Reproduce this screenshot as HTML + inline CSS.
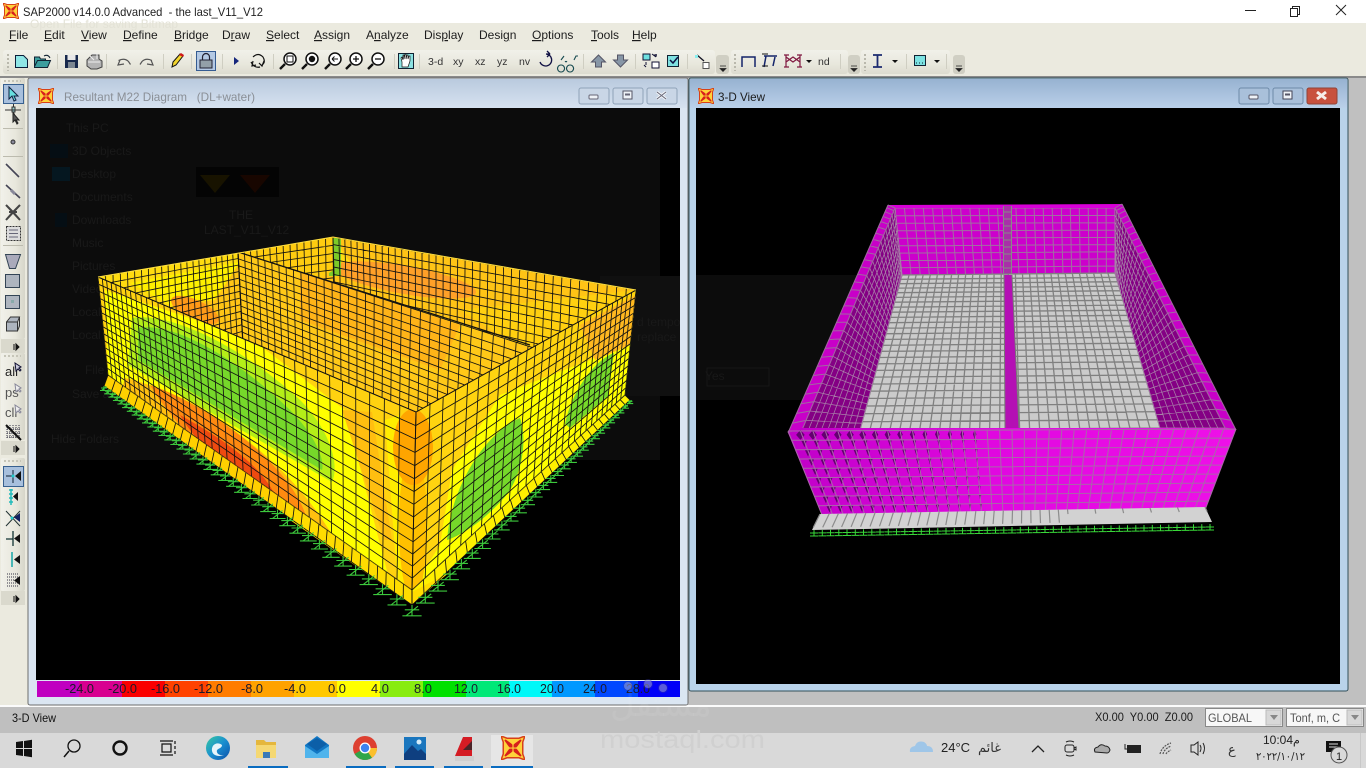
<!DOCTYPE html>
<html><head><meta charset="utf-8"><title>SAP2000</title>
<style>
html,body{margin:0;padding:0;background:#c0c0c0;width:1366px;height:768px;overflow:hidden}
svg{display:block;position:absolute;left:0;top:0}
text{font-family:"Liberation Sans","DejaVu Sans",sans-serif;white-space:pre}
.m{font-size:12px;fill:#1c1c1c}
.t{font-size:10.5px;fill:#333}
.g{font-size:12px;fill:#191919}
.l{font-size:13px;fill:#1a1a2a}
.a{font-family:"DejaVu Sans",sans-serif}
</style></head><body>
<svg width="1366" height="768" viewBox="0 0 1366 768" xmlns="http://www.w3.org/2000/svg">
<defs>
<linearGradient id="tl" x1="0" y1="0" x2="0" y2="1"><stop offset="0" stop-color="#b9cade"/><stop offset="1" stop-color="#d6e2f0"/></linearGradient>
<linearGradient id="tr" x1="0" y1="0" x2="0" y2="1"><stop offset="0" stop-color="#97b2d1"/><stop offset="1" stop-color="#bad0e9"/></linearGradient>
<linearGradient id="tb" x1="0" y1="0" x2="0" y2="1"><stop offset="0" stop-color="#f1f1ea"/><stop offset=".6" stop-color="#e8e7dc"/><stop offset="1" stop-color="#dcdbcf"/></linearGradient>
<linearGradient id="tv" x1="0" y1="0" x2="1" y2="0"><stop offset="0" stop-color="#f1f1ea"/><stop offset=".6" stop-color="#e8e7dc"/><stop offset="1" stop-color="#d6d5c9"/></linearGradient>
<linearGradient id="fw" x1="0" y1="0" x2="1" y2="0"><stop offset="0" stop-color="#c000c8"/><stop offset=".45" stop-color="#e008e0"/><stop offset="1" stop-color="#ee10e8"/></linearGradient>
<linearGradient id="edge" x1="0" y1="0" x2="1" y2="1"><stop offset="0" stop-color="#36c9a0"/><stop offset=".5" stop-color="#1a8fd0"/><stop offset="1" stop-color="#0c4fa8"/></linearGradient>
<clipPath id="cb"><polygon points="98,277 333,237 636,290 416,412"/></clipPath>
<clipPath id="cl"><polygon points="98,277 416,412 412,590 108,375"/></clipPath>
<clipPath id="cr"><polygon points="416,412 636,290 625,395 412,590"/></clipPath>
<clipPath id="vw"><rect x="36" y="108" width="644" height="572"/></clipPath>
<symbol id="sap" viewBox="0 0 32 32">
<path d="M0 0L8 3H24L32 0L29 8V24L32 32L24 29H8L0 32L3 24V8Z" fill="#ffd23a" stroke="#d84018" stroke-width="2"/>
<path d="M6 6L13 11L16 14L19 11L26 6L21 13L18 16L21 19L26 26L19 21L16 18L13 21L6 26L11 19L14 16L11 13Z" fill="#d8201c" stroke="#d8201c" stroke-width="2.500" stroke-linejoin="round"/>
<path d="M16 9v14M9 16h14" stroke="#ffd23a" stroke-width="1.500"/>
</symbol>
<g id="mag"><circle cx="3" cy="-2" r="6" fill="#fff" stroke="#111" stroke-width="1.500"/><path d="M-2 3L-7 8" stroke="#111" stroke-width="2.400"/></g>
</defs>

<!-- base -->
<rect width="1366" height="768" fill="#c0c0c0"/>
<rect width="1366" height="23" fill="#fff"/>
<rect y="23" width="1366" height="53" fill="#ebeadf"/>
<rect y="76" width="1366" height="2" fill="#8a8a8a"/>
<rect y="78" width="28" height="628" fill="#ebeadf"/>
<rect y="705" width="1366" height="2" fill="#fbfbfb"/>
<rect y="707" width="1366" height="26" fill="#bfbfbf"/>
<rect y="733" width="1366" height="35" fill="#d9d9d9"/>

<!-- title bar -->
<use href="#sap" x="3" y="3" width="16" height="16"/>
<text x="23" y="16" font-size="12" fill="#222" textLength="240" lengthAdjust="spacingAndGlyphs">SAP2000 v14.0.0 Advanced  - the last_V11_V12</text>
<path d="M1245 10.500h11" stroke="#222"/>
<path d="M1290.500 8.500h7v8h-7zM1292.500 8.500v-2h7v8h-2" fill="none" stroke="#222"/>
<path d="M1336 5l10 10M1346 5l-10 10" stroke="#222"/>
<text x="30" y="28" font-size="12" fill="#e3e2d6">Open File for saving Bitmap</text>

<!-- menu -->
<g class="m">
<text class="m" x="9" y="39"><tspan text-decoration="underline">F</tspan>ile</text>
<text class="m" x="44" y="39"><tspan text-decoration="underline">E</tspan>dit</text>
<text class="m" x="81" y="39"><tspan text-decoration="underline">V</tspan>iew</text>
<text class="m" x="123" y="39"><tspan text-decoration="underline">D</tspan>efine</text>
<text class="m" x="174" y="39"><tspan text-decoration="underline">B</tspan>ridge</text>
<text class="m" x="222" y="39">D<tspan text-decoration="underline">r</tspan>aw</text>
<text class="m" x="266" y="39"><tspan text-decoration="underline">S</tspan>elect</text>
<text class="m" x="314" y="39"><tspan text-decoration="underline">A</tspan>ssign</text>
<text class="m" x="366" y="39">A<tspan text-decoration="underline">n</tspan>alyze</text>
<text class="m" x="424" y="39">Dis<tspan text-decoration="underline">p</tspan>lay</text>
<text class="m" x="479" y="39">Desi<tspan text-decoration="underline">g</tspan>n</text>
<text class="m" x="532" y="39"><tspan text-decoration="underline">O</tspan>ptions</text>
<text class="m" x="591" y="39"><tspan text-decoration="underline">T</tspan>ools</text>
<text class="m" x="632" y="39"><tspan text-decoration="underline">H</tspan>elp</text>
</g>

<!-- toolbars -->
<rect x="3" y="50" width="712" height="24" rx="3" fill="url(#tb)"/>
<rect x="716" y="55" width="13" height="19" rx="3" fill="#d0cfc3"/>
<path d="M720 66h6M720 68.500h6l-3 3z" fill="#222" stroke="#222" stroke-width=".7"/>
<rect x="731" y="50" width="117" height="24" rx="3" fill="url(#tb)"/>
<rect x="848" y="55" width="12" height="19" rx="3" fill="#d0cfc3"/>
<path d="M851 66h6M851 68.500h6l-3 3z" fill="#222" stroke="#222" stroke-width=".7"/>
<rect x="861" y="50" width="89" height="24" rx="3" fill="url(#tb)"/>
<rect x="953" y="55" width="12" height="19" rx="3" fill="#d0cfc3"/>
<path d="M956 66h6M956 68.500h6l-3 3z" fill="#222" stroke="#222" stroke-width=".7"/>
<path d="M8 54v17M735 54v17M865 54v17" stroke="#b9b8ac" stroke-width="2" stroke-dasharray="2 2"/>
<path d="M57.500 54v15M106.500 54v15M163.500 54v15M191.500 54v15M222.500 54v15M273.500 54v15M394.500 54v15M419.500 54v15M583.500 54v15M635.500 54v15M687.500 54v15M840.500 54v15M906.500 54v15M946.500 54v15" stroke="#cfcec2"/>
<!-- new / open / save / print -->
<path d="M15.500 55.500h8l4 4v8h-12z" fill="#8fe6e6" stroke="#0a1d3a"/>
<path d="M34.500 66.500l3-6h13l-3 7h-13zM34.500 66v-9h5l1 2h5v1" fill="#3d9e9e" stroke="#123"/>
<path d="M44 56q4-2 6 2" fill="none" stroke="#123"/>
<rect x="65" y="55" width="13" height="13" fill="#18294c"/><rect x="67.500" y="55" width="8" height="5" fill="#e8e8e8"/><rect x="68" y="62" width="7" height="6" fill="#7c8792"/>
<path d="M87 60l5-5h7v4l3 2v6l-5 2h-6l-4-3z" fill="#b4b4b4" stroke="#444"/><path d="M88 62h12M90 56l4 4M92 54h5v5" stroke="#eee" fill="none"/>
<path d="M120 60l-2 5 6-1M118.500 60.500q6-3 10 1l2 3" fill="none" stroke="#555" stroke-width="1.200"/>
<path d="M151 60l2 5-6-1M152 60.500q-6-3-10 1l-2 3" fill="none" stroke="#555" stroke-width="1.200"/>
<path d="M172 67l1-5 7-8 3 2-7 9z" fill="#f2d52e" stroke="#111"/><path d="M179 55l2-2 3 2-1 2z" fill="#d01818"/>
<rect x="196.500" y="51.500" width="19" height="19" fill="#b4c9e4" stroke="#355c92"/>
<rect x="200" y="60" width="12" height="8" fill="#93a0a8" stroke="#223"/><path d="M202.500 60v-3a3.500 3.500 0 0 1 7 0v3" fill="none" stroke="#223" stroke-width="1.200"/>
<path d="M234 57l5 4-5 4z" fill="#16267c"/>
<path d="M253 57q5-5 10 0q3 5-1 8M264 61l-2 5-3-3M260 67q-4 1-7-2l-2-3M253 61l-1 5 4-1" fill="none" stroke="#111" stroke-width="1.200"/>
<!-- zoom -->
<g transform="translate(287,61)"><use href="#mag"/><rect x="0" y="-5" width="6" height="6" fill="none" stroke="#111"/></g>
<g transform="translate(309,61)"><use href="#mag"/><circle cx="3" cy="-2" r="3.200" fill="#111"/></g>
<g transform="translate(332,61)"><use href="#mag"/><path d="M0-2h6M0-2l2.500-2.500M0-2l2.500 2.500" stroke="#111" fill="none"/></g>
<g transform="translate(353,61)"><use href="#mag"/><path d="M0-2h6M3-5v6" stroke="#111" stroke-width="1.300"/></g>
<g transform="translate(375,61)"><use href="#mag"/><path d="M0-2h6" stroke="#111" stroke-width="1.300"/></g>
<rect x="398.500" y="53.500" width="15" height="15" fill="#8ce2e2" stroke="#123"/>
<path d="M402 67v-5l-1-4 1-1 1 3v-5h1v4l1-5h1v5l1-4h1v4l1-3h1v5l-2 6z" fill="#fff" stroke="#111" stroke-width=".7"/>
<g class="t">
<text class="t" x="428" y="65" font-size="11">3-d</text>
<text class="t" x="453" y="65">xy</text><text class="t" x="475" y="65">xz</text><text class="t" x="497" y="65">yz</text><text class="t" x="519" y="65">nv</text>
<text class="t" x="818" y="65" font-size="11">nd</text>
</g>
<path d="M540 62a6 6 0 1 0 6-8h4M550 54l-3-3M550 54l-3 3" fill="none" stroke="#114" stroke-width="1.300"/>
<path d="M561 65a3.500 3.500 0 1 0 .1 0zM570 65a3.500 3.500 0 1 0 .1 0zM565 62q1-1 2 0M574 60l2-4h2M561 60l3-4" fill="none" stroke="#164a50" stroke-width="1.100"/>
<path d="M598.500 54l7 7h-4v5h-6v-5h-4z" fill="#8796a6" stroke="#556" transform="translate(0,1)"/>
<path d="M620.500 67l7-7h-4v-5h-6v5h-4z" fill="#8796a6" stroke="#556"/>
<rect x="643" y="54" width="7" height="6" fill="#6ee0e0" stroke="#113"/><rect x="652" y="62" width="7" height="6" fill="#fff" stroke="#113"/>
<path d="M652 54l4 3M656 57v-3M644 65l2 2M646 62v3M653 55h4" stroke="#113" fill="none"/>
<rect x="667.500" y="55.500" width="11" height="11" fill="#7fe1e1" stroke="#123"/><path d="M670 60l3 3 5-6" fill="none" stroke="#0a1040" stroke-width="1.500"/>
<path d="M697 55l7 6" stroke="#112" stroke-width="1.300"/><rect x="695" y="55" width="3" height="3" fill="#8ee"/><rect x="703" y="62.500" width="6" height="6" fill="#fff" stroke="#555"/>
<!-- frame icons -->
<path d="M742 67v-10h13v10" fill="none" stroke="#14246a" stroke-width="1.500"/>
<path d="M764 67l2-11M775 57l-2 9M764 56h13" fill="none" stroke="#14246a" stroke-width="1.500"/><path d="M762 54h6M762 66h6" stroke="#111"/>
<path d="M786 55v12M800 55v12M786 62l7-5 7 5M786 57l7 5 7-5M784 55h5M797 55h5M784 67h5M797 67h5" fill="none" stroke="#801840" stroke-width="1.200"/>
<path d="M806 60h6l-3 3z" fill="#111"/>
<path d="M873 55h9M873 67h9M877.500 55v12" stroke="#1b2a70" stroke-width="1.800"/>
<path d="M892 60h6l-3 3z" fill="#111"/>
<rect x="914.500" y="55.500" width="11" height="10" fill="#7ce2e2" stroke="#123"/><path d="M916 63h8" stroke="#123" stroke-dasharray="1 2"/>
<path d="M934 60h6l-3 3z" fill="#111"/>

<!-- left toolbar -->
<rect x="1" y="78" width="24" height="261" rx="2" fill="url(#tv)"/>
<rect x="1" y="339" width="24" height="14" fill="#dad9cd"/>
<rect x="1" y="353" width="24" height="87" rx="2" fill="url(#tv)"/>
<rect x="1" y="441" width="24" height="14" fill="#dad9cd"/>
<rect x="1" y="458" width="24" height="133" rx="2" fill="url(#tv)"/>
<rect x="1" y="591" width="24" height="14" fill="#dad9cd"/>
<path d="M4 81h17M4 356h17M4 461h17" stroke="#c6c5b8" stroke-width="2" stroke-dasharray="2 2"/>
<path d="M3 128.500h20M3 156.500h20M3 245.500h20" stroke="#bcbbae"/>
<path d="M16 344v6l3-3zM16 446v6l3-3zM16 596v6l3-3zM14 344v6M14 446v6M14 596v6" stroke="#111" fill="#111"/>
<rect x="3.500" y="84.500" width="20" height="19" fill="#a8c0dd" stroke="#38608f"/>
<path d="M9 87v12l3-3 2 5 2-1-2-4h4z" fill="#67dfe0" stroke="#102040"/>
<path d="M5 110h16M12 107h3v5h-3zM13.500 104v3M13.500 112l1 3" stroke="#333" fill="#9cc" />
<path d="M13 113v9l2-2 2 4 1-1-2-3h3z" fill="#555" stroke="#222"/>
<circle cx="13" cy="142" r="2" fill="#889" stroke="#333"/>
<path d="M6 164l13 13" stroke="#445" stroke-width="1.600"/>
<path d="M6 185l14 13" stroke="#445" stroke-width="1.600"/><path d="M11 190l4 4" stroke="#889" stroke-width="3"/>
<path d="M6 205l7 7-7 8M20 205l-7 7 7 8M6 205l14 15M20 205l-14 15M9 212h8" stroke="#444" stroke-width="2" fill="none"/>
<rect x="6.500" y="226.500" width="14" height="14" fill="#dcdcdc" stroke="#333" stroke-dasharray="2 1"/><path d="M9 230h9M9 233.500h9M9 237h9" stroke="#667"/>
<path d="M5.500 254.500h15l-5 14h-6z" fill="#aab" stroke="#345"/>
<rect x="5.500" y="274.500" width="14" height="13" fill="#aeb5bf" stroke="#345"/>
<rect x="5.500" y="295.500" width="14" height="13" fill="#aeb5bf" stroke="#345"/><rect x="11" y="300" width="3" height="3" fill="#8aa"/>
<path d="M6.500 322v9h11v-9zM6.500 322l4-5h9l-2 5M19.500 317v9l-2 5" fill="#aeb5bf" stroke="#333"/>
<text x="5" y="376" font-size="13" fill="#222">all</text><path d="M15 363l1 8 2-2 2 2 1-1-2-2 2-1z" fill="#ccd" stroke="#113"/>
<text x="5" y="397" font-size="13" fill="#555">ps</text><path d="M15 384l1 8 2-2 2 2 1-1-2-2 2-1z" fill="#eee" stroke="#889"/>
<text x="5" y="417" font-size="13" fill="#555">clr</text><path d="M15 405l1 8 2-2 2 2 1-1-2-2 2-1z" fill="#eee" stroke="#889"/>
<path d="M7 425v14M10 425v14M13 425v14M16 425v14M19 425v14M7 429h13M7 433h13M7 437h13" stroke="#334" stroke-dasharray="1 1"/><path d="M6 425l15 15" stroke="#111" stroke-width="2"/>
<rect x="3.500" y="466.500" width="20" height="20" fill="#a8c0dd" stroke="#38608f"/>
<path d="M6 476h7M13 470v13" stroke="#123"/><path d="M21 471v10l-6-5z" fill="#111"/><circle cx="13" cy="476" r="1.500" fill="#2cc"/>
<path d="M11 489v16M9 490h4M9 494h4M9 498h4M9 502h4" stroke="#2bb" stroke-width="1.500"/><path d="M18 492v9l-5-4.500z" fill="#111"/>
<path d="M6 511l14 15M6 526l14-15" stroke="#233"/><path d="M20 513v9l-6-4.500z" fill="#112060"/><circle cx="12" cy="518" r="1.500" fill="#2cc"/>
<path d="M6 539h7M13 531v15" stroke="#133" stroke-width="1.300"/><path d="M20 534v9l-6-4.500z" fill="#111"/>
<path d="M12 552v15" stroke="#2aa" stroke-width="1.600"/><path d="M20 555v9l-6-4.500z" fill="#111"/>
<path d="M7 574h12M7 577h12M7 580h12M7 583h12M7 586h12" stroke="#334" stroke-dasharray="1 1"/><path d="M20 576v9l-6-4.500z" fill="#111"/>

<!-- left child window -->
<rect x="28" y="78" width="660" height="627" rx="2" fill="#dbe6f2" stroke="#6e6e6e"/>
<rect x="29" y="79" width="658" height="29" fill="url(#tl)"/>
<use href="#sap" x="38" y="88" width="16" height="16"/>
<text x="64" y="101" font-size="12" fill="#8a8f96" textLength="191" lengthAdjust="spacingAndGlyphs">Resultant M22 Diagram   (DL+water)</text>
<rect x="579" y="88" width="30" height="16" rx="2" fill="#c9d6e6" stroke="#8fa3b8"/>
<rect x="613" y="88" width="30" height="16" rx="2" fill="#c9d6e6" stroke="#8fa3b8"/>
<rect x="647" y="88" width="30" height="16" rx="2" fill="#c9d6e6" stroke="#8fa3b8"/>
<rect x="589" y="95" width="9" height="4" rx="1" fill="#eef2f7" stroke="#667"/>
<rect x="623" y="91" width="9" height="8" fill="#eef2f7" stroke="#556"/><rect x="625" y="93.500" width="5" height="2" fill="#667"/>
<path d="M657 92l9 7M666 92l-9 7" stroke="#f2f5f8" stroke-width="3"/><path d="M657 92l9 7M666 92l-9 7" stroke="#667" stroke-width="1"/>
<rect x="36" y="108" width="644" height="572" fill="#000"/>
<!-- ghost dialog -->
<rect x="36" y="108" width="624" height="352" fill="#0c0c0c"/>
<rect x="600" y="276" width="80" height="120" fill="#101010"/>
<rect x="196" y="167" width="83" height="30" fill="#040404"/>
<path d="M200 175h30l-15 18z" fill="#181300"/><path d="M240 175h30l-15 18z" fill="#180600"/>
<g class="g" clip-path="url(#vw)">
<text class="g" x="66" y="132">This PC</text><text class="g" x="72" y="155">3D Objects</text><text class="g" x="72" y="178">Desktop</text><text class="g" x="72" y="201">Documents</text><text class="g" x="72" y="224">Downloads</text><text class="g" x="72" y="247">Music</text><text class="g" x="72" y="270">Pictures</text><text class="g" x="72" y="293">Videos</text><text class="g" x="72" y="316">Local Disk</text><text class="g" x="72" y="339">Local Disk</text><text class="g" x="85" y="374">File name:</text><text class="g" x="72" y="398">Save as type:</text><text class="g" x="51" y="443">Hide Folders</text><text class="g" x="229" y="219">THE</text><text class="g" x="204" y="234">LAST_V11_V12</text><text class="g" x="637" y="326">d temporarily ends</text><text class="g" x="637" y="341">replace it?</text>
</g>
<rect x="50" y="144" width="18" height="14" fill="#050e14"/><rect x="52" y="167" width="18" height="14" fill="#051720"/><rect x="55" y="213" width="12" height="14" fill="#050e14"/>

<!-- left model -->
<g clip-path="url(#cb)">
<rect x="90" y="230" width="560" height="190" fill="#ffc416"/>
<path d="M98 277L333 237L350 262L240 262L205 300L150 315Z" fill="#ffdc10"/>
<path d="M130 283L240 262L215 300L170 305Z" fill="#fff000"/>
<ellipse cx="195" cy="310" rx="26" ry="10" transform="rotate(25 195 310)" fill="#ff9a18"/>
<ellipse cx="405" cy="280" rx="72" ry="14" transform="rotate(10 405 280)" fill="#ffa028"/>
<path d="M460 310L636 290L636 350L540 360Z" fill="#ffd010"/>
<rect x="329" y="238" width="12" height="38" fill="#7ccb28"/>
<path d="M238 252L333 237L334 270L300 290L243 300Z" fill="#ffcc10"/>
<path id="mb3" fill="none" stroke="#111" stroke-width=".85"/>
<path id="mb2" fill="none" stroke="#111" stroke-width=".85"/>
<path id="mb1" fill="none" stroke="#111" stroke-width=".85"/>
<polygon points="238,252 540,350 530,470 243,345" fill="#ffc818"/>
<path d="M300 272L460 325L440 370L300 320Z" fill="#ffb418"/>
<path id="mb4" fill="none" stroke="#111" stroke-width=".85"/>
<path d="M238 252L530 345M238 252L243 345" stroke="#111" stroke-width="1.200" fill="none"/>
</g>
<polygon points="108,375 412,590 412,605 104,386" fill="#ffd000"/>
<polygon points="280,495 412,590 412,605 290,520" fill="#ffdc00"/>
<polygon points="412,590 625,395 630,400 412,605" fill="#fff000"/>
<polygon points="412,592 450,572 440,580 412,605" fill="#ffdc00"/>
<path id="msl" fill="none" stroke="#111" stroke-width=".85"/>
<path id="msr" fill="none" stroke="#111" stroke-width=".85"/>
<g clip-path="url(#cl)">
<rect x="90" y="270" width="330" height="330" fill="#ffd210"/>
<path d="M105 290L250 338L345 410L392 590L330 548L108 375Z" fill="#ffff00"/>
<path d="M342 410L372 412L392 540L384 540Z" fill="#ffbe10"/>
<path d="M385 420L400 415L412 590L398 590Z" fill="#ffee00"/>
<path d="M132 318C170 312 240 345 300 400C330 430 340 465 332 482L128 365Z" fill="#b4ee18"/>
<path d="M138 328C170 322 230 352 290 410C315 435 325 460 322 470L138 360Z" fill="#76d82a"/>
<path d="M125 378C190 392 300 460 345 560L120 395Z" fill="#ffc010"/>
<path d="M150 385C210 405 290 465 306 516C260 500 190 450 150 385Z" fill="#ff8a10"/>
<path d="M180 415C225 440 260 465 275 495C240 478 200 450 180 415Z" fill="#ee4a10"/>
<ellipse cx="413" cy="525" rx="14" ry="75" fill="#ffc000"/>
<ellipse cx="413" cy="447" rx="20" ry="38" fill="#ffa500"/>
<path id="ml" fill="none" stroke="#111" stroke-width=".85"/>
</g>
<g clip-path="url(#cr)">
<rect x="410" y="285" width="230" height="310" fill="#ffff00"/>
<path d="M416 412L636 290L632 335L590 360L500 395L452 470L440 545L412 590Z" fill="#ffd410"/>
<ellipse cx="413" cy="525" rx="14" ry="75" fill="#ffc000"/>
<ellipse cx="413" cy="447" rx="20" ry="38" fill="#ffa500"/>
<path d="M440 560C450 470 495 415 530 408L528 470L480 530Z" fill="#ffff00"/>
<path d="M447 540C452 480 490 430 520 418C528 440 522 480 502 500C482 522 462 535 447 540Z" fill="#76d82a"/>
<path d="M565 424C572 390 595 360 614 353L608 396L570 428Z" fill="#76d82a"/>
<path d="M580 325L636 295L630 345L595 360Z" fill="#ffb820"/>
<path id="mr" fill="none" stroke="#111" stroke-width=".85"/>
</g>
<path d="M98 277L416 412L636 290M416 412L412 590" fill="none" stroke="#111" stroke-width="1"/>
<path d="M98 277L333 237L636 290" fill="none" stroke="#ffe040" stroke-width="1"/>
<path id="sl" fill="none" stroke="#3cc83c" stroke-width="1.100"/>

<!-- legend -->
<rect x="37" y="681" width="643" height="16" fill="#c000c0"/>
<rect x="79" y="681" width="43" height="16" fill="#d80090"/>
<rect x="122" y="681" width="43" height="16" fill="#fa0000"/>
<rect x="165" y="681" width="43" height="16" fill="#ff4200"/>
<rect x="208" y="681" width="43" height="16" fill="#ff7c00"/>
<rect x="251" y="681" width="43" height="16" fill="#ffa200"/>
<rect x="294" y="681" width="43" height="16" fill="#ffc800"/>
<rect x="337" y="681" width="43" height="16" fill="#ffff00"/>
<rect x="380" y="681" width="43" height="16" fill="#88ec10"/>
<rect x="423" y="681" width="43" height="16" fill="#00e000"/>
<rect x="466" y="681" width="43" height="16" fill="#00e878"/>
<rect x="509" y="681" width="43" height="16" fill="#00f8f8"/>
<rect x="552" y="681" width="43" height="16" fill="#0098ff"/>
<rect x="595" y="681" width="43" height="16" fill="#0048ff"/>
<rect x="638" y="681" width="42" height="16" fill="#0000f8"/>
<g class="l">
<text class="l" x="65" y="693" textLength="29" lengthAdjust="spacingAndGlyphs">-24.0</text>
<text class="l" x="108" y="693" textLength="29" lengthAdjust="spacingAndGlyphs">-20.0</text>
<text class="l" x="151" y="693" textLength="29" lengthAdjust="spacingAndGlyphs">-16.0</text>
<text class="l" x="194" y="693" textLength="29" lengthAdjust="spacingAndGlyphs">-12.0</text>
<text class="l" x="241" y="693" textLength="22" lengthAdjust="spacingAndGlyphs">-8.0</text>
<text class="l" x="284" y="693" textLength="22" lengthAdjust="spacingAndGlyphs">-4.0</text>
<text class="l" x="328" y="693" textLength="18" lengthAdjust="spacingAndGlyphs">0.0</text>
<text class="l" x="371" y="693" textLength="18" lengthAdjust="spacingAndGlyphs">4.0</text>
<text class="l" x="414" y="693" textLength="18" lengthAdjust="spacingAndGlyphs">8.0</text>
<text class="l" x="454" y="693" textLength="24" lengthAdjust="spacingAndGlyphs">12.0</text>
<text class="l" x="497" y="693" textLength="24" lengthAdjust="spacingAndGlyphs">16.0</text>
<text class="l" x="540" y="693" textLength="24" lengthAdjust="spacingAndGlyphs">20.0</text>
<text class="l" x="583" y="693" textLength="24" lengthAdjust="spacingAndGlyphs">24.0</text>
<text class="l" x="626" y="693" textLength="24" lengthAdjust="spacingAndGlyphs">28.0</text>
</g>

<!-- right child window -->
<rect x="689" y="78" width="659" height="613" rx="2" fill="#b9d3ea" stroke="#32505a"/>
<rect x="690" y="79" width="657" height="29" fill="url(#tr)"/>
<use href="#sap" x="698" y="88" width="16" height="16"/>
<text x="718" y="101" font-size="12" fill="#1c1c1c" textLength="47" lengthAdjust="spacingAndGlyphs">3-D View</text>
<rect x="1239" y="88" width="30" height="16" rx="2" fill="#a9c0da" stroke="#6d8aa8"/>
<rect x="1273" y="88" width="30" height="16" rx="2" fill="#a9c0da" stroke="#6d8aa8"/>
<rect x="1307" y="88" width="30" height="16" rx="2" fill="#c8513e" stroke="#904438"/>
<rect x="1249" y="95" width="9" height="4" rx="1" fill="#eef2f7" stroke="#556"/>
<rect x="1283" y="91" width="9" height="8" fill="#eef2f7" stroke="#445"/><rect x="1285" y="93.500" width="5" height="2" fill="#556"/>
<path d="M1317 92l9 7M1326 92l-9 7" stroke="#f6eeea" stroke-width="3"/>
<rect x="696" y="108" width="644" height="576" fill="#000"/>
<rect x="696" y="275" width="165" height="125" fill="#0c0c0c"/>
<text x="705" y="380" font-size="12" fill="#181818">Yes</text>
<rect x="707" y="368" width="62" height="18" fill="none" stroke="#161616"/>

<!-- right model -->
<polygon points="895,208 1115,208 1115,273 902,275" fill="#cc00cc"/>
<path id="rb" fill="none" stroke="#a070a0" stroke-width="1"/>
<polygon points="888,205 1122,204 1115,208 895,208" fill="#d800d8"/>
<rect x="1003" y="206" width="9" height="69" fill="#a830a8"/>
<path d="M1003.500 206v69M1011.500 206v69M1004 212h7M1004 219h7M1004 226h7M1004 233h7M1004 240h7M1004 247h7M1004 254h7M1004 261h7M1004 268h7" stroke="#888"/>
<polygon points="902,275 1115,273 1160,428 860,430" fill="#cbcbcb"/>
<path id="rf" fill="none" stroke="#808080" stroke-width="1.300"/>
<polygon points="1004,275 1012,275 1019,428 1005,428" fill="#b410b4"/>
<path d="M1004 275l1 153M1012 275l7 153" stroke="#777"/>
<polygon points="895,208 902,275 860,430 802,430" fill="#840084"/>
<path id="ril" fill="none" stroke="#a880a8" stroke-width=".75"/>
<polygon points="1115,208 1115,273 1160,428 1225,428" fill="#840084"/>
<path id="rir" fill="none" stroke="#a880a8" stroke-width=".75"/>
<polygon points="888,205 895,208 802,430 788,433" fill="#c800c8"/>
<path id="rbl" fill="none" stroke="#a068a0" stroke-width="1"/>
<polygon points="1122,204 1115,208 1225,428 1236,430" fill="#c800c8"/>
<path id="rbr" fill="none" stroke="#a068a0" stroke-width="1"/>
<polygon points="788,433 802,428 1225,428 1236,430 1205,510 822,515" fill="url(#fw)"/>
<path id="rw" fill="#640070"/>
<path id="rfw" fill="none" stroke="#a868a8" stroke-width="1"/>
<polygon points="820,514 1205,507 1212,522 812,530" fill="#d2d2d2"/>
<path id="rsl" fill="none" stroke="#8c8c8c" stroke-width="1.200"/>
<path id="rsup" fill="none" stroke="#38d838" stroke-width="1"/>

<!-- status bar -->
<text x="12" y="722" font-size="12" fill="#111" textLength="44" lengthAdjust="spacingAndGlyphs">3-D View</text>
<text x="1095" y="721" font-size="12" fill="#1c1c1c" textLength="98" lengthAdjust="spacingAndGlyphs">X0.00  Y0.00  Z0.00</text>
<rect x="1205.500" y="708.500" width="77" height="18" fill="#f7f7f7" stroke="#888"/>
<rect x="1266" y="710" width="15" height="15" fill="#d8d8d8" stroke="#bbb"/><path d="M1270 715h8l-4 5z" fill="#888"/>
<text x="1208" y="722" font-size="12" fill="#555" textLength="44" lengthAdjust="spacingAndGlyphs">GLOBAL</text>
<rect x="1286.500" y="708.500" width="77" height="18" fill="#f7f7f7" stroke="#888"/>
<rect x="1347" y="710" width="15" height="15" fill="#d8d8d8" stroke="#bbb"/><path d="M1351 715h8l-4 5z" fill="#888"/>
<text x="1290" y="722" font-size="12" fill="#555" textLength="50" lengthAdjust="spacingAndGlyphs">Tonf, m, C</text>

<!-- watermark -->
<text x="600" y="748" font-size="25" fill="#d0d0d0" textLength="165" lengthAdjust="spacingAndGlyphs">mostaql.com</text>
<text class="a" x="610" y="716" font-size="34" fill="#fff" fill-opacity=".07">مستقل</text>
<g fill="#3a3aa0" opacity=".4"><circle cx="628" cy="686" r="5"/><circle cx="648" cy="684" r="5"/><circle cx="663" cy="688" r="5"/></g>
<g fill="#d6dce6" opacity=".35"><circle cx="628" cy="686" r="4"/><circle cx="648" cy="684" r="4"/><circle cx="663" cy="688" r="4"/></g>

<!-- taskbar -->
<rect x="491" y="735" width="42" height="33" fill="#e6e6e6"/>
<rect x="248" y="766" width="40" height="2" fill="#0a6cc0"/><rect x="346" y="766" width="40" height="2" fill="#0a6cc0"/><rect x="395" y="766" width="39" height="2" fill="#0a6cc0"/><rect x="444" y="766" width="39" height="2" fill="#0a6cc0"/><rect x="491" y="766" width="42" height="2" fill="#0a6cc0"/>
<path d="M16 742l7-1v7h-7zM24 741l8-1.200v8.200h-8zM16 749h7v7l-7-1zM24 749h8v8.200l-8-1.200z" fill="#111"/>
<circle cx="74" cy="746" r="6" fill="none" stroke="#111" stroke-width="1.300"/><path d="M69 751l-5 6" stroke="#111" stroke-width="1.500"/>
<circle cx="120" cy="748" r="6.500" fill="none" stroke="#111" stroke-width="2.400"/>
<path d="M160 741h13M160 755h13M162 744h9v8h-9zM175 741v3M175 746v3M175 751v3" fill="none" stroke="#111" stroke-width="1.200"/>
<circle cx="218" cy="748" r="12" fill="url(#edge)"/><path d="M222 745c-5-4-11 0-10 6 1 5 7 6 12 4-5 1-8-2-7-5 2-2 5-2 5-5z" fill="#e6f4fa"/>
<path d="M256 740h8l2 2h10v15h-20z" fill="#e5b73d"/><rect x="256" y="745" width="20" height="13" fill="#f5d873"/><path d="M263 758v-6h7v6" fill="#3a7ab8"/>
<path d="M305 745l12-9 12 9v13h-24z" fill="#1177c4"/><path d="M305 746l12 8 12-8v12h-24z" fill="#50b4ec"/><path d="M307 744l10 7 10-7-10-6z" fill="#0c5fa8"/>
<circle cx="365" cy="748" r="12" fill="#dd4031"/><path d="M365 748L354.600 754A12 12 0 0 0 372 757.800z" fill="#2fa64a"/><path d="M365 748L377 748A12 12 0 0 1 372 757.800z" fill="#fbc02d"/><circle cx="365" cy="748" r="5.500" fill="#fff"/><circle cx="365" cy="748" r="4.200" fill="#3e83f0"/>
<rect x="404" y="737" width="22" height="23" fill="#1a76be"/><path d="M404 760v-6l8-9 6 6 3-2 5 5v6z" fill="#0e3f80"/><circle cx="419" cy="742" r="2.500" fill="#d4ecfa"/>
<path d="M455 756l8-19h9v19z" fill="#d41c24"/><path d="M455 756h19v5h-19z" fill="#cfcfcf"/><path d="M463 750h9v-9z" fill="#4a2428"/>
<use href="#sap" x="501" y="736" width="24" height="24"/>

<!-- tray -->
<path d="M910 752q-1-5 5-6 2-6 9-4 3 2 3 4 6 0 6 6z" fill="#9fc6e8"/>
<text x="941" y="752" font-size="13" fill="#222">24°C</text>
<text class="a" x="978" y="752" font-size="13" fill="#333">غائم</text>
<path d="M1032 752l6-6 6 6" fill="none" stroke="#222" stroke-width="1.300"/>
<rect x="1065" y="745" width="9" height="7" rx="2" fill="none" stroke="#222"/><path d="M1074 748l2-1v3l-2-1M1066 742q4-2 8 0M1066 755q4 2 8 0" fill="none" stroke="#222"/>
<path d="M1095 752q-2-4 3-5 3-4 7-1 4 0 5 4-1 3-3 3z" fill="#aaa" stroke="#222"/>
<rect x="1127" y="745" width="14" height="8" fill="#222"/><path d="M1125 744v5h3" fill="none" stroke="#222"/>
<path d="M1160 754q2-8 11-11M1163 754q1-5 8-8M1166 754q1-2 5-4" fill="none" stroke="#555" stroke-width="1.200" stroke-dasharray="2 1"/>
<path d="M1191 745h3l4-3v13l-4-3h-3z" fill="none" stroke="#222"/><path d="M1200 745q2 3 0 7M1203 743q3 5 0 11" fill="none" stroke="#222"/>
<text class="a" x="1228" y="754" font-size="13" fill="#333">ع</text>
<text x="1263" y="744" font-size="12" fill="#222">10:04</text><text class="a" x="1293" y="744" font-size="11" fill="#222">م</text>
<text class="a" x="1256" y="760" font-size="11" fill="#222" textLength="49" lengthAdjust="spacingAndGlyphs">٢٠٢٢/١٠/١٢</text>
<path d="M1326 741h15v11h-7l-3 4v-4h-5z" fill="#111"/><path d="M1329 744h9M1329 747h9" stroke="#ddd"/>
<circle cx="1339" cy="755" r="8" fill="#d9d9d9" stroke="#555"/><text x="1336" y="760" font-size="11" fill="#222">1</text>
<path d="M1360.500 733v35" stroke="#c8c8c8"/>

<script>
function H(q){var x0=q[0][0],y0=q[0][1],x1=q[1][0],y1=q[1][1],x2=q[2][0],y2=q[2][1],x3=q[3][0],y3=q[3][1],
dx1=x1-x2,dx2=x3-x2,sx=x0-x1+x2-x3,dy1=y1-y2,dy2=y3-y2,sy=y0-y1+y2-y3,den=dx1*dy2-dx2*dy1,
g=(sx*dy2-dx2*sy)/den,h=(dx1*sy-sx*dy1)/den,a=x1-x0+g*x1,b=x3-x0+h*x3,d=y1-y0+g*y1,e=y3-y0+h*y3;
return function(u,v){var w=g*u+h*v+1;return[(a*u+b*v+x0)/w,(d*u+e*v+y0)/w]}}
function B(q,pu,pv){return function(u,v){u=Math.pow(u,pu||1);v=Math.pow(v,pv||1);
var tx=q[0][0]+(q[1][0]-q[0][0])*u,ty=q[0][1]+(q[1][1]-q[0][1])*u,bx=q[3][0]+(q[2][0]-q[3][0])*u,by=q[3][1]+(q[2][1]-q[3][1])*u;
return[tx+(bx-tx)*v,ty+(by-ty)*v]}}
function f(p){return p[0].toFixed(1)+' '+p[1].toFixed(1)}
function ML(id,F,nu,nv){var s='',i,j;
for(i=0;i<=nu;i++)s+='M'+f(F(i/nu,0))+'L'+f(F(i/nu,.5))+'L'+f(F(i/nu,1));
for(j=0;j<=nv;j++)s+='M'+f(F(0,j/nv))+'L'+f(F(.5,j/nv))+'L'+f(F(1,j/nv));
document.getElementById(id).setAttribute('d',s)}
function M(id,q,nu,nv){ML(id,H(q),nu,nv)}
var QL=[[98,277],[416,412],[412,590],[108,375]],QR=[[416,412],[636,290],[625,395],[412,590]];
M('ml',QL,38,14);M('mr',QR,28,14);
M('mb3',[[333,237],[636,290],[628,420],[336,340]],40,14);
M('mb2',[[238,252],[333,237],[334,340],[243,345]],14,13);
M('mb1',[[98,277],[238,252],[243,345],[100,390]],22,14);
M('mb4',[[238,252],[540,350],[530,470],[243,345]],34,14);
M('msl',[[108,375],[412,590],[412,605],[104,386]],38,1);
M('msr',[[412,590],[625,395],[630,400],[412,605]],28,1);
(function(){var s='',FL=H(QL),FR=H(QR),i,t,p,x,y;
function sup(x,y,k){s+='M'+x.toFixed(1)+' '+y.toFixed(1)+'v'+(9*k).toFixed(1)+'M'+(x-6*k).toFixed(1)+' '+(y+4*k).toFixed(1)+'h'+(12*k).toFixed(1)+'M'+(x-8*k).toFixed(1)+' '+(y+9*k).toFixed(1)+'h'+(16*k).toFixed(1)+'M'+(x+5*k).toFixed(1)+' '+(y+1*k).toFixed(1)+'l'+(-10*k).toFixed(1)+' '+(8*k).toFixed(1)}
for(i=0;i<=38;i++){t=i/38;p=FL(t,1);x=p[0]-4*(1-t);y=p[1]+11+4*t;sup(x,y,0.5+0.7*t)}
for(i=1;i<=28;i++){t=i/28;p=FR(t,1);x=p[0]+5*t;y=p[1]+15-10*t;sup(x,y,1.2-0.8*t)}
document.getElementById('sl').setAttribute('d',s)})();
M('rb',[[895,208],[1115,208],[1115,273],[902,275]],24,9);
M('rf',[[902,275],[1115,273],[1160,428],[860,430]],30,26);
ML('ril',B([[895,208],[902,275],[860,430],[802,430]],1,1.3),9,30);
ML('rir',B([[1115,208],[1115,273],[1160,428],[1225,428]],1,1.3),9,30);
ML('rbl',B([[888,205],[895,208],[802,430],[788,433]],1,1.3),1,30);
ML('rbr',B([[1122,204],[1115,208],[1225,428],[1236,430]],1,1.3),1,30);
var QF=[[788,431],[1236,429],[1205,510],[822,515]];
ML('rfw',B(QF),36,9);
(function(){var F=B([[820,514],[1205,507],[1212,522],[812,530]]),s='',i;
for(i=0;i<=42;i++){if(i>26&&i%3)continue;s+='M'+f(F(i/42,0))+'L'+f(F(i/42,i>26?.3:.85))}
document.getElementById('rsl').setAttribute('d',s)})();
(function(){var F=B(QF),s='',i,j,p,w,h;
for(i=1;i<16;i++)for(j=0;j<9;j++){p=F(i/36,j/9);w=(j==0?4.500:3)*(1-i/24);h=(j==0?10:7);
if(j==0)s+='M'+p[0].toFixed(1)+' '+(p[1]-1).toFixed(1)+'l'+w.toFixed(1)+' '+(h/2)+'l'+(-w).toFixed(1)+' '+(h/2)+'l'+(-w).toFixed(1)+' '+(-h/2)+'Z';
else s+='M'+(p[0]-w).toFixed(1)+' '+p[1].toFixed(1)+'h'+(2*w).toFixed(1)+'L'+(p[0]+0.5).toFixed(1)+' '+(p[1]+h).toFixed(1)+'Z'}
document.getElementById('rw').setAttribute('d',s);
var u='';
for(i=0;i<=48;i++){var t=i/48,x=814+396*t,y=530-6*t;u+='M'+x.toFixed(1)+' '+y.toFixed(1)+'v6M'+(x-4).toFixed(1)+' '+(y+3).toFixed(1)+'h8M'+(x-4).toFixed(1)+' '+(y+6).toFixed(1)+'h8'}
document.getElementById('rsup').setAttribute('d',u)})();
</script>
</svg>
</body></html>
